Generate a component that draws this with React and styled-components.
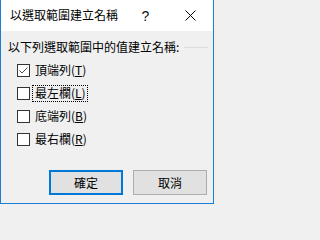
import React, { useState } from "react";
import styled, { createGlobalStyle } from "styled-components";

const GlobalStyle = createGlobalStyle`
  html, body {
    margin: 0;
    padding: 0;
    width: 214px;
    height: 204px;
    overflow: hidden;
    background: #f0f0f0;
  }
  * {
    box-sizing: border-box;
  }
`;

const font = `"Noto Sans CJK TC", "Noto Sans CJK SC", "Noto Sans", sans-serif`;

const Window = styled.div`
  width: 214px;
  height: 204px;
  display: flex;
  flex-direction: column;
  border-left: 1px solid #1a7ed4;
  border-right: 1px solid #1a7ed4;
  border-bottom: 1px solid #1a7ed4;
  font-family: ${font};
  font-size: 12px;
  color: #000;
`;

const TitleBar = styled.div`
  height: 31px;
  flex: none;
  display: flex;
  align-items: center;
  background: #ffffff;
`;

const Title = styled.div`
  flex: 1;
  padding-left: 9px;
  line-height: 16px;
  padding-bottom: 1px;
`;

const CaptionButton = styled.div`
  width: 45px;
  height: 31px;
  display: flex;
  align-items: center;
  justify-content: center;
  font-family: "Liberation Sans", Arial, sans-serif;
  font-size: 14px;
  color: #111;
`;

const Body = styled.div`
  flex: 1;
  display: flex;
  flex-direction: column;
  background: #f0f0f0;
  padding: 8px 5px 8px 7px;
`;

const GroupHeader = styled.div`
  display: flex;
  align-items: center;
  height: 16px;
  line-height: 16px;
`;

const GroupLine = styled.div`
  flex: 1;
  height: 1px;
  margin-left: 5px;
  margin-top: 0px;
  background: #dcdcdc;
`;

const OptionList = styled.div`
  display: flex;
  flex-direction: column;
  gap: 6px;
  margin-top: 7px;
  padding-left: 9px;
`;

const Row = styled.label`
  display: flex;
  align-items: center;
  height: 17px;
  cursor: default;
`;

const Box = styled.span`
  width: 13px;
  height: 13px;
  flex: none;
  border: 1px solid #333333;
  background: #ffffff;
  display: flex;
  align-items: center;
  justify-content: center;
`;

const Caption = styled.span`
  margin-left: 2px;
  padding: 0 2px 0 3px;
  height: 17px;
  line-height: 16px;
  outline: ${(p) => (p.$focus ? "1px dotted #000" : "none")};
  outline-offset: -1px;
  u {
    text-decoration: underline;
    text-underline-offset: 1px;
  }
`;

const ButtonRow = styled.div`
  margin-top: auto;
  display: flex;
  justify-content: flex-end;
  gap: 10px;
  padding-right: 1px;
`;

const Button = styled.button`
  width: 74px;
  height: 25px;
  padding: 0;
  background: #e1e1e1;
  border: ${(p) => (p.$primary ? "2px solid #0078d7" : "1px solid #adadad")};
  font-family: ${font};
  font-size: 12px;
  color: #000;
  line-height: 16px;
`;

const CheckMark = () => (
  <svg width="11" height="11" viewBox="0 0 11 11">
    <polyline
      points="1.5,5.5 4,8 9.5,2.5"
      fill="none"
      stroke="#4d4d4d"
      strokeWidth="1"
    />
  </svg>
);

const CloseIcon = () => (
  <svg width="11" height="11" viewBox="0 0 11 11">
    <path d="M0.5 0.5 L10.5 10.5 M10.5 0.5 L0.5 10.5" stroke="#000" strokeWidth="1" />
  </svg>
);

const options = [
  { label: "頂端列", key: "T" },
  { label: "最左欄", key: "L" },
  { label: "底端列", key: "B" },
  { label: "最右欄", key: "R" },
];

export default function App() {
  const [checked, setChecked] = useState([true, false, false, false]);

  const toggle = (i) =>
    setChecked((prev) => prev.map((v, j) => (j === i ? !v : v)));

  return (
    <>
      <GlobalStyle />
      <Window>
        <TitleBar>
          <Title>以選取範圍建立名稱</Title>
          <CaptionButton>?</CaptionButton>
          <CaptionButton>
            <CloseIcon />
          </CaptionButton>
        </TitleBar>
        <Body>
          <GroupHeader>
            以下列選取範圍中的值建立名稱:
            <GroupLine />
          </GroupHeader>
          <OptionList>
            {options.map((o, i) => (
              <Row key={o.key} onClick={() => toggle(i)}>
                <Box>{checked[i] && <CheckMark />}</Box>
                <Caption $focus={i === 1}>
                  {o.label}(<u>{o.key}</u>)
                </Caption>
              </Row>
            ))}
          </OptionList>
          <ButtonRow>
            <Button $primary>確定</Button>
            <Button>取消</Button>
          </ButtonRow>
        </Body>
      </Window>
    </>
  );
}
